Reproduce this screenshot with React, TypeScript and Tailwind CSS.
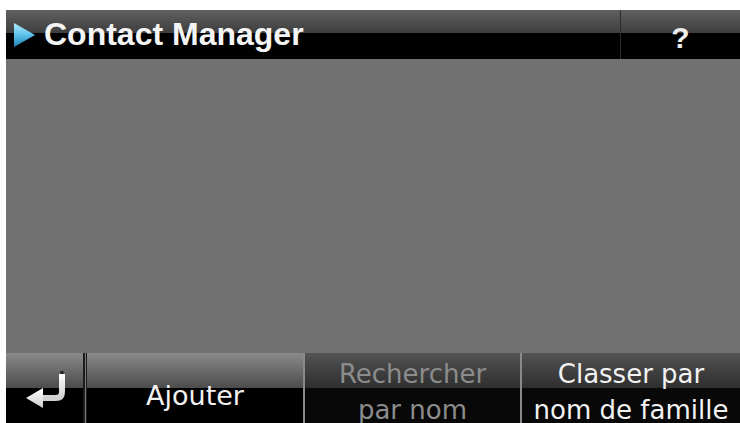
import React from 'react'

const dejavu = { fontFamily: '"DejaVu Sans", "Liberation Sans", sans-serif' }

function PlayMark() {
  return (
    <svg width="23" height="24" viewBox="0 0 23 24" className="shrink-0">
      <defs>
        <linearGradient id="tri" x1="0" y1="0" x2="0" y2="1">
          <stop offset="0" stopColor="#b4ecff" />
          <stop offset="0.5" stopColor="#5cc2ea" />
          <stop offset="1" stopColor="#1d7fb3" />
        </linearGradient>
      </defs>
      <polygon points="1,0 22,12 1,24" fill="url(#tri)" />
    </svg>
  )
}

function BackArrow() {
  return (
    <svg width="77" height="70" viewBox="0 0 77 70">
      <defs>
        <linearGradient id="arr" x1="0" y1="0" x2="0" y2="1">
          <stop offset="0" stopColor="#ffffff" />
          <stop offset="1" stopColor="#cfcfcf" />
        </linearGradient>
      </defs>
      <path d="M56 21 V39 Q56 45 50 45 H34" fill="none" stroke="url(#arr)" strokeWidth="6" />
      <polygon points="20,45 37,35 37,55" fill="url(#arr)" />
      <rect x="54.5" y="18" width="3" height="3" fill="#222" />
    </svg>
  )
}

function Separator({ light }: { light?: boolean }) {
  return light ? (
    <div className="w-[2px] shrink-0 bg-[#8a8a8a]" />
  ) : (
    <div className="flex w-[4px] shrink-0 bg-[#1c1c1c]">
      <div className="w-[2px]" />
      <div className="w-[1px] bg-[#7a7a7a]" />
    </div>
  )
}

export default function App() {
  const lit = 'bg-[linear-gradient(to_bottom,#8a8a8a_0px,#4c4c4c_35px,#000_35px)]'
  const dim = 'bg-[linear-gradient(to_bottom,#535353_0px,#2e2e2e_35px,#080808_35px)]'

  return (
    <div className="w-[740px] h-[423px] bg-white pt-[10px] pl-[6px] overflow-hidden">
      <div className="flex flex-col h-full">
        {/* title bar */}
        <header className="flex h-[49px] shrink-0 bg-[linear-gradient(to_bottom,#606060_0px,#3e3e3e_23px,#000_23px)]">
          <div className="flex flex-1 items-center pl-[7px]">
            <PlayMark />
            <span
              className="ml-[8px] text-[32px] font-bold text-[#f4f4f4] leading-[49px]"
              style={{ fontFamily: '"Liberation Sans", Arial, sans-serif' }}
            >
              Contact Manager
            </span>
          </div>
          <div className="w-[1px] bg-[#2c2c2c]" />
          <div className="w-[119px] flex justify-center pt-[6px]">
            <span
              className="text-[30px] font-bold text-[#eeeeee] leading-[43px]"
              style={{ fontFamily: '"Liberation Sans", Arial, sans-serif' }}
            >
              ?
            </span>
          </div>
        </header>

        <main className="flex-1 bg-[#717171]" />

        {/* bottom buttons */}
        <footer className="flex h-[70px] shrink-0" style={dejavu}>
          <button className={`w-[77px] shrink-0 ${lit}`}>
            <BackArrow />
          </button>
          <Separator />
          <button className={`w-[216px] shrink-0 ${lit} flex justify-center pt-[25px]`}>
            <span className="text-[27px] leading-[36px] text-[#f2f2f2]">Ajouter</span>
          </button>
          <Separator light />
          <button className={`w-[215px] shrink-0 ${dim} flex flex-col items-center pt-[3px]`}>
            <span className="text-[26px] leading-[36px] text-[#8c8c8c]">Rechercher</span>
            <span className="text-[26px] leading-[36px] text-[#8c8c8c]">par nom</span>
          </button>
          <Separator light />
          <button className={`flex-1 ${dim} flex flex-col items-center pt-[3px]`}>
            <span className="text-[26px] leading-[36px] text-[#f2f2f2]">Classer par</span>
            <span className="text-[26px] leading-[36px] text-[#f2f2f2] whitespace-nowrap">nom de famille</span>
          </button>
        </footer>
      </div>
    </div>
  )
}
